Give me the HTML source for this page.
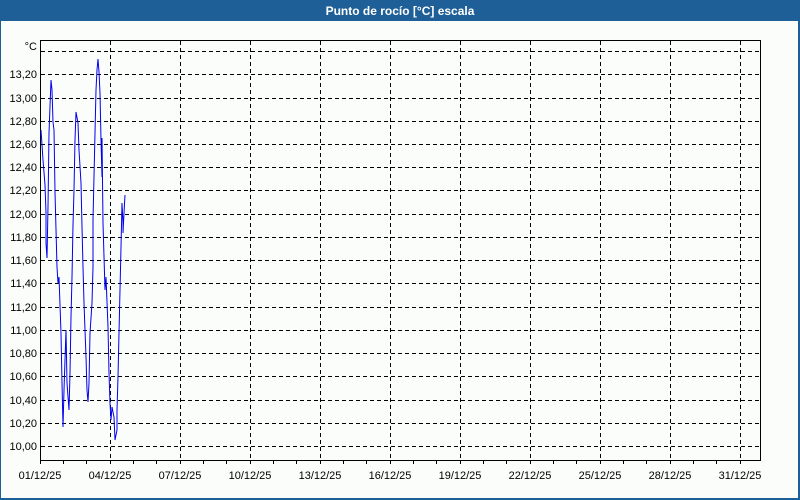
<!DOCTYPE html>
<html><head><meta charset="utf-8"><style>
html,body{margin:0;padding:0;}
body{width:800px;height:500px;overflow:hidden;background:#fbfdfb;font-family:"Liberation Sans","DejaVu Sans",sans-serif;}
</style></head><body>
<svg width="800" height="500" xmlns="http://www.w3.org/2000/svg" style="display:block">
<rect x="0" y="0" width="800" height="500" fill="#fbfdfb"/>
<rect x="0" y="0" width="800" height="21" fill="#1d5f96"/>
<rect x="0" y="0" width="1" height="500" fill="#1d5f96"/>
<rect x="798" y="0" width="2" height="500" fill="#1d5f96"/>
<rect x="0" y="498" width="800" height="2" fill="#1d5f96"/>
<text x="400" y="15" fill="#fff" font-size="12" font-weight="bold" text-anchor="middle">Punto de rocío [°C] escala</text>
<g stroke="#000" stroke-width="1" stroke-dasharray="4,3" shape-rendering="crispEdges">
<line x1="41" y1="51.5" x2="760" y2="51.5"/>
<line x1="41" y1="74.5" x2="760" y2="74.5"/>
<line x1="41" y1="98.5" x2="760" y2="98.5"/>
<line x1="41" y1="121.5" x2="760" y2="121.5"/>
<line x1="41" y1="144.5" x2="760" y2="144.5"/>
<line x1="41" y1="167.5" x2="760" y2="167.5"/>
<line x1="41" y1="190.5" x2="760" y2="190.5"/>
<line x1="41" y1="214.5" x2="760" y2="214.5"/>
<line x1="41" y1="237.5" x2="760" y2="237.5"/>
<line x1="41" y1="260.5" x2="760" y2="260.5"/>
<line x1="41" y1="283.5" x2="760" y2="283.5"/>
<line x1="41" y1="307.5" x2="760" y2="307.5"/>
<line x1="41" y1="330.5" x2="760" y2="330.5"/>
<line x1="41" y1="353.5" x2="760" y2="353.5"/>
<line x1="41" y1="376.5" x2="760" y2="376.5"/>
<line x1="41" y1="400.5" x2="760" y2="400.5"/>
<line x1="41" y1="423.5" x2="760" y2="423.5"/>
<line x1="41" y1="446.5" x2="760" y2="446.5"/>
<line x1="110.5" y1="41" x2="110.5" y2="460"/>
<line x1="180.5" y1="41" x2="180.5" y2="460"/>
<line x1="250.5" y1="41" x2="250.5" y2="460"/>
<line x1="320.5" y1="41" x2="320.5" y2="460"/>
<line x1="390.5" y1="41" x2="390.5" y2="460"/>
<line x1="460.5" y1="41" x2="460.5" y2="460"/>
<line x1="530.5" y1="41" x2="530.5" y2="460"/>
<line x1="600.5" y1="41" x2="600.5" y2="460"/>
<line x1="670.5" y1="41" x2="670.5" y2="460"/>
<line x1="740.5" y1="41" x2="740.5" y2="460"/>
</g>
<g stroke="#000" stroke-width="1" shape-rendering="crispEdges" fill="none">
<polyline points="40.5,460 40.5,40.5 760.5,40.5 760.5,460.5 40,460.5"/>
<path d="M63.5,461v3M86.5,461v3M110.5,461v3M133.5,461v3M156.5,461v3M180.5,461v3M203.5,461v3M226.5,461v3M250.5,461v3M273.5,461v3M296.5,461v3M320.5,461v3M343.5,461v3M366.5,461v3M390.5,461v3M413.5,461v3M436.5,461v3M460.5,461v3M483.5,461v3M506.5,461v3M530.5,461v3M553.5,461v3M576.5,461v3M600.5,461v3M623.5,461v3M646.5,461v3M670.5,461v3M693.5,461v3M716.5,461v3M740.5,461v3M40.5,461v3"/>
</g>
<polyline fill="none" stroke="#0000ee" stroke-width="1" points="41,130 43,160 45,185 46,213 46,243 47,258 48,207 49,133 51,80 52,90 53,122 54,130 55,192 57,267 58,283 59,277 61,333 62,383 63,427 64,390 66,330 67,383 69,410 70,373 71,317 72,277 73,225 74,190 75,140 76,112 78,123 79,150 81,183 82,227 83,267 84,303 86,357 87,390 88,402 89,383 90,333 92,303 93,267 93,220 95,133 96,90 97,70 98,59 99,72 100,93 101,140 102,177 102,138 103,223 105,290 106,277 108,327 109,373 110,403 111,420 112,407 114,417 115,440 117,430 117,410 118,377 119,333 121,247 122,203 123,223 123,233 124,213 125,195"/>
<g font-size="11" fill="#000" text-anchor="end">
<text x="37" y="50">°C</text>
<text x="37" y="78">13,20</text>
<text x="37" y="102">13,00</text>
<text x="37" y="125">12,80</text>
<text x="37" y="148">12,60</text>
<text x="37" y="171">12,40</text>
<text x="37" y="194">12,20</text>
<text x="37" y="218">12,00</text>
<text x="37" y="241">11,80</text>
<text x="37" y="264">11,60</text>
<text x="37" y="287">11,40</text>
<text x="37" y="311">11,20</text>
<text x="37" y="334">11,00</text>
<text x="37" y="357">10,80</text>
<text x="37" y="380">10,60</text>
<text x="37" y="404">10,40</text>
<text x="37" y="427">10,20</text>
<text x="37" y="450">10,00</text>
</g>
<g font-size="11" fill="#000" text-anchor="middle">
<text x="40" y="479">01/12/25</text>
<text x="110" y="479">04/12/25</text>
<text x="180" y="479">07/12/25</text>
<text x="250" y="479">10/12/25</text>
<text x="320" y="479">13/12/25</text>
<text x="390" y="479">16/12/25</text>
<text x="460" y="479">19/12/25</text>
<text x="530" y="479">22/12/25</text>
<text x="600" y="479">25/12/25</text>
<text x="670" y="479">28/12/25</text>
<text x="740" y="479">31/12/25</text>
</g>
</svg>
</body></html>
